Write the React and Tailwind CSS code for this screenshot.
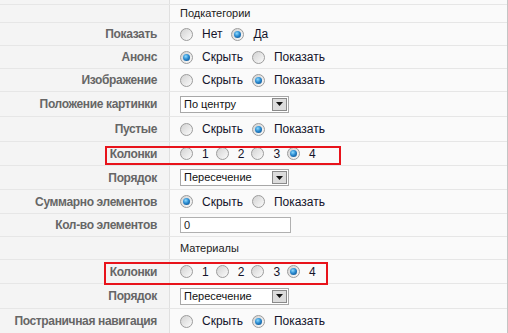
import React from "react";

const Radio = ({ checked }) => (
  <span className="relative inline-flex w-[13px] h-[13px] shrink-0 items-center justify-center rounded-full border border-[#9c9c9c] bg-linear-to-br from-[#d2d2d2] to-[#fbfbfb]">
    {checked && (
      <span className="block w-[7px] h-[7px] rounded-full bg-[radial-gradient(circle_at_40%_35%,#8fdcff_0%,#2a8ad0_45%,#06427c_100%)]" />
    )}
  </span>
);

const RadioGroup = ({ options, value, tight }) => (
  <div className="flex items-center">
    {options.map((o, i) => (
      <div key={i} className="flex items-center">
        <Radio checked={i === value} />
        <span className={tight ? "ml-[9px] mr-[7px] text-[12px] text-[#14142a]" : "ml-[9px] mr-[9px] text-[12px] text-[#14142a]"}>{o}</span>
      </div>
    ))}
  </div>
);

const Select = ({ text }) => (
  <div className="flex items-center w-[109px] h-[17px] border border-[#a8a8a8] bg-white">
    <span className="flex-1 pl-[3px] text-[11px] text-[#111] leading-none">{text}</span>
    <span className="flex items-center justify-center w-[15px] h-[13px] mr-[1px] border border-[#8a8a8a] bg-[#dcdcdc]">
      <svg width="7" height="4" viewBox="0 0 7 4"><path d="M0 0h7L3.5 4z" fill="#111" /></svg>
    </span>
  </div>
);

const Row = ({ label, h, children }) => (
  <div className="grid grid-cols-[170px_1fr] border-b border-[#e6e6e6]" style={{ height: h }}>
    <div className="flex items-center justify-end pr-[12px] bg-[#f4f4f4] border-r border-[#e0e0e0] text-[12px] font-bold text-[#666] tracking-[-0.35px] whitespace-nowrap">
      {label}
    </div>
    <div className="flex items-center pl-[10px]">{children}</div>
  </div>
);

export default function App() {
  const hide = ["Скрыть", "Показать"];
  const cols = ["1", "2", "3", "4"];
  return (
    <div className="relative w-[508px] h-[333px] overflow-hidden bg-[#fafafa] border-r border-[#c4c4c4] font-['Liberation_Sans',Arial,sans-serif]">
      <Row label="" h={5} />
      <Row label="" h={18}>
        <span className="text-[11px] text-[#222]">Подкатегории</span>
      </Row>
      <Row label="Показать" h={23}><RadioGroup options={["Нет", "Да"]} value={1} /></Row>
      <Row label="Анонс" h={23}><RadioGroup options={hide} value={0} /></Row>
      <Row label="Изображение" h={23}><RadioGroup options={hide} value={1} /></Row>
      <Row label="Положение картинки" h={25}><Select text="По центру" /></Row>
      <Row label="Пустые" h={25}><RadioGroup options={hide} value={1} /></Row>
      <Row label="Колонки" h={24}><RadioGroup options={cols} value={3} tight /></Row>
      <Row label="Порядок" h={24}><Select text="Пересечение" /></Row>
      <Row label="Суммарно элементов" h={24}><RadioGroup options={hide} value={0} /></Row>
      <Row label="Кол-во элементов" h={23}>
        <div className="flex items-center w-[111px] h-[16px] border border-[#b0b0b0] bg-white pl-[3px] text-[11px] text-[#222]">0</div>
      </Row>
      <Row label="" h={23}>
        <span className="text-[11px] text-[#222]">Материалы</span>
      </Row>
      <Row label="Колонки" h={24}><RadioGroup options={cols} value={3} tight /></Row>
      <Row label="Порядок" h={25}><Select text="Пересечение" /></Row>
      <Row label="Постраничная навигация" h={25}><RadioGroup options={hide} value={1} /></Row>

      <div className="absolute left-[105px] top-[146px] w-[236px] h-[19px] border-2 border-[#e8131b]" />
      <div className="absolute left-[104px] top-[262px] w-[224px] h-[23px] border-2 border-[#e8131b]" />
    </div>
  );
}
